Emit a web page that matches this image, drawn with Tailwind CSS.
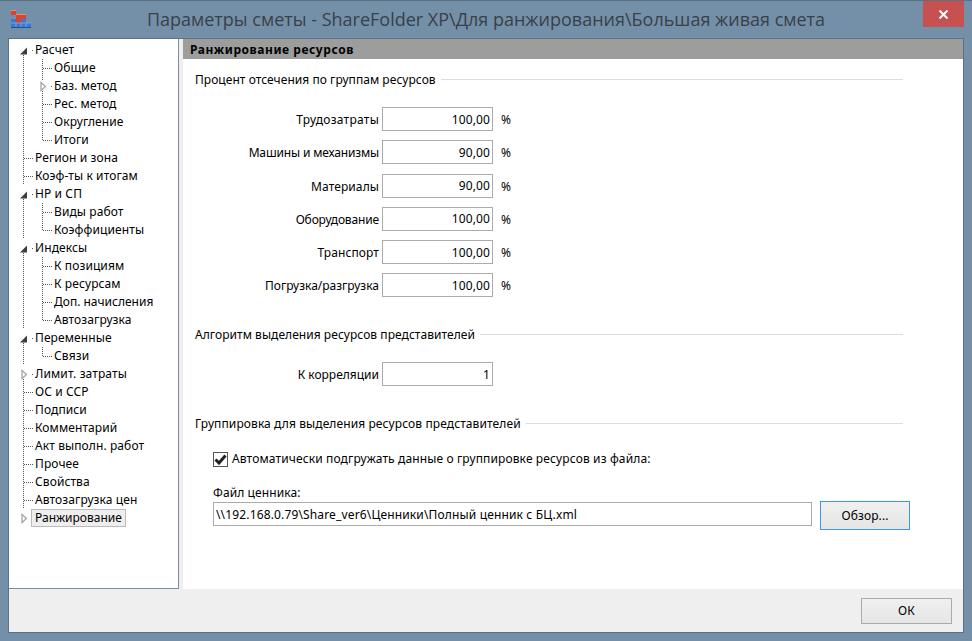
<!DOCTYPE html>
<html lang="ru">
  <head>
    <meta charset="UTF-8" />
    <title>Параметры сметы</title>
    <script src="https://cdn.jsdelivr.net/npm/@tailwindcss/browser@4"></script>
  </head>
  <body class="w-[972px] h-[641px] overflow-hidden bg-[#7390a8] font-['Noto_Sans',sans-serif] text-[12px] tracking-[0.1px] text-black">
    <svg width="0" height="0" class="absolute">
      <defs>
        <symbol id="mid" viewBox="0 0 25 18"><path d="M13.5 0V18M14 9.5H24" stroke="#555" stroke-dasharray="1 1" fill="none" /></symbol>
        <symbol id="open" viewBox="0 0 25 18"><path d="M13.5 14V18M22 9.5H23" stroke="#555" stroke-dasharray="1 1" fill="none" /><path d="M10 13.5H17V6.5Z" fill="#3c3c3c" /></symbol>
        <symbol id="closed" viewBox="0 0 25 18"><path d="M13.5 14V18M22 9.5H23" stroke="#555" stroke-dasharray="1 1" fill="none" /><path d="M12 5.5V13.5L16.5 9.5Z" fill="#fff" stroke="#a6a6a6" stroke-width="1.3" /></symbol>
        <symbol id="last" viewBox="0 0 25 18"><path d="M22 9.5H23" stroke="#555" stroke-dasharray="1 1" fill="none" /><path d="M12 5.5V13.5L16.5 9.5Z" fill="#fff" stroke="#a6a6a6" stroke-width="1.3" /></symbol>
        <symbol id="c-mid" viewBox="0 0 44 18"><path d="M13.5 0V18M32.5 0V18M33 9.5H43" stroke="#555" stroke-dasharray="1 1" fill="none" /></symbol>
        <symbol id="c-end" viewBox="0 0 44 18"><path d="M13.5 0V18M32.5 0V9M33 9.5H43" stroke="#555" stroke-dasharray="1 1" fill="none" /></symbol>
        <symbol id="c-exp" viewBox="0 0 44 18"><path d="M13.5 0V18M32.5 14V18M32.5 0V4M41 9.5H42" stroke="#555" stroke-dasharray="1 1" fill="none" /><path d="M31 5.5V13.5L35.5 9.5Z" fill="#fff" stroke="#a6a6a6" stroke-width="1.3" /></symbol>
      </defs>
    </svg>

    <header class="relative h-[38px] flex items-center justify-center border-t border-[#5b7186]">
      <svg class="absolute left-[10px] top-[9px]" width="22" height="19" viewBox="0 0 22 19">
        <path d="M1 0h5v5H1zM6 4h10v5H6zM6 9h5v4H6z" fill="#d8452e" />
        <path d="M1 0h5v1H1zM6 4h10v1H6z" fill="#ee8a70" />
        <path d="M1 9h5v4H1zM11 9h5v4h-5zM1 13h20v5H1z" fill="#3f78d0" />
        <path d="M1 17h20v1H1z" fill="#1f4f9a" />
        <path d="M6 13v4M11 13v4M16 13v4M1 13h20" stroke="#8fb2e4" stroke-width="0.7" />
      </svg>
      <h1 class="font-['Open_Sans',sans-serif] text-[18px] tracking-normal text-[#3a4048]">Параметры сметы - ShareFolder XP\Для ранжирования\Большая живая смета</h1>
      <button class="absolute right-[8px] top-0 w-[41px] h-[26px] bg-[#c75050] flex items-center justify-center">
        <svg width="11" height="9" viewBox="0 0 11 9"><path d="M1.5 0.5L9.5 8.5M9.5 0.5L1.5 8.5" stroke="#fff" stroke-width="2" /></svg>
      </button>
    </header>

    <div class="mx-[8px] h-[595px] border border-[#5b7186] bg-[#efefef] flex flex-col">
      <div class="flex h-[551px]">
        <nav class="w-[170px] bg-white border-r border-b border-[#7f8c99] pt-[2px] pl-[1px]">
          <div class="flex h-[18px] items-center"><svg class="w-[25px] h-[18px]"><use href="#open" /></svg><span>Расчет</span></div>
          <div class="flex h-[18px] items-center"><svg class="w-[44px] h-[18px]"><use href="#c-mid" /></svg><span>Общие</span></div>
          <div class="flex h-[18px] items-center"><svg class="w-[44px] h-[18px]"><use href="#c-exp" /></svg><span>Баз. метод</span></div>
          <div class="flex h-[18px] items-center"><svg class="w-[44px] h-[18px]"><use href="#c-mid" /></svg><span>Рес. метод</span></div>
          <div class="flex h-[18px] items-center"><svg class="w-[44px] h-[18px]"><use href="#c-mid" /></svg><span>Округление</span></div>
          <div class="flex h-[18px] items-center"><svg class="w-[44px] h-[18px]"><use href="#c-end" /></svg><span>Итоги</span></div>
          <div class="flex h-[18px] items-center"><svg class="w-[25px] h-[18px]"><use href="#mid" /></svg><span>Регион и зона</span></div>
          <div class="flex h-[18px] items-center"><svg class="w-[25px] h-[18px]"><use href="#mid" /></svg><span>Коэф-ты к итогам</span></div>
          <div class="flex h-[18px] items-center"><svg class="w-[25px] h-[18px]"><use href="#open" /></svg><span>НР и СП</span></div>
          <div class="flex h-[18px] items-center"><svg class="w-[44px] h-[18px]"><use href="#c-mid" /></svg><span>Виды работ</span></div>
          <div class="flex h-[18px] items-center"><svg class="w-[44px] h-[18px]"><use href="#c-end" /></svg><span>Коэффициенты</span></div>
          <div class="flex h-[18px] items-center"><svg class="w-[25px] h-[18px]"><use href="#open" /></svg><span>Индексы</span></div>
          <div class="flex h-[18px] items-center"><svg class="w-[44px] h-[18px]"><use href="#c-mid" /></svg><span>К позициям</span></div>
          <div class="flex h-[18px] items-center"><svg class="w-[44px] h-[18px]"><use href="#c-mid" /></svg><span>К ресурсам</span></div>
          <div class="flex h-[18px] items-center"><svg class="w-[44px] h-[18px]"><use href="#c-mid" /></svg><span class="tracking-normal">Доп. начисления</span></div>
          <div class="flex h-[18px] items-center"><svg class="w-[44px] h-[18px]"><use href="#c-end" /></svg><span>Автозагрузка</span></div>
          <div class="flex h-[18px] items-center"><svg class="w-[25px] h-[18px]"><use href="#open" /></svg><span>Переменные</span></div>
          <div class="flex h-[18px] items-center"><svg class="w-[44px] h-[18px]"><use href="#c-end" /></svg><span>Связи</span></div>
          <div class="flex h-[18px] items-center"><svg class="w-[25px] h-[18px]"><use href="#closed" /></svg><span>Лимит. затраты</span></div>
          <div class="flex h-[18px] items-center"><svg class="w-[25px] h-[18px]"><use href="#mid" /></svg><span>ОС и ССР</span></div>
          <div class="flex h-[18px] items-center"><svg class="w-[25px] h-[18px]"><use href="#mid" /></svg><span>Подписи</span></div>
          <div class="flex h-[18px] items-center"><svg class="w-[25px] h-[18px]"><use href="#mid" /></svg><span>Комментарий</span></div>
          <div class="flex h-[18px] items-center"><svg class="w-[25px] h-[18px]"><use href="#mid" /></svg><span>Акт выполн. работ</span></div>
          <div class="flex h-[18px] items-center"><svg class="w-[25px] h-[18px]"><use href="#mid" /></svg><span>Прочее</span></div>
          <div class="flex h-[18px] items-center"><svg class="w-[25px] h-[18px]"><use href="#mid" /></svg><span>Свойства</span></div>
          <div class="flex h-[18px] items-center"><svg class="w-[25px] h-[18px]"><use href="#mid" /></svg><span>Автозагрузка цен</span></div>
          <div class="flex h-[18px] items-center"><svg class="w-[25px] h-[18px]"><use href="#last" /></svg><span class="-ml-[4px] px-[3px] h-[18px] leading-[16px] tracking-normal bg-[#eee] border border-[#bbb]">Ранжирование</span></div>
        </nav>

        <main class="ml-[4px] w-[780px] bg-white">
          <h2 class="h-[20px] bg-[#9d9d9d] px-[7px] font-bold tracking-[0.55px] leading-[22px]">Ранжирование ресурсов</h2>

          <section class="pl-[12px] pr-[60px] pt-[12px]">
            <div class="flex items-center gap-[5px] h-[18px]"><h3 class="tracking-[0.05px]">Процент отсечения по группам ресурсов</h3><div class="flex-1 h-px bg-[#d5dfe5] -mt-px"></div></div>
            <div class="mt-[18px] flex flex-col gap-[9.3px]">
              <div class="flex items-center h-[24px]"><label class="w-[187px] text-right pr-[3px] pt-[2px] tracking-[0.25px]">Трудозатраты</label><input class="w-[111px] h-[24px] border border-[#ababab] text-right px-[2px]" value="100,00" /><span class="ml-[8px] pt-[2px]">%</span></div>
              <div class="flex items-center h-[24px]"><label class="w-[187px] text-right pr-[3px] pt-[2px] tracking-[-0.15px]">Машины и механизмы</label><input class="w-[111px] h-[24px] border border-[#ababab] text-right px-[2px]" value="90,00" /><span class="ml-[8px] pt-[2px]">%</span></div>
              <div class="flex items-center h-[24px]"><label class="w-[187px] text-right pr-[3px] pt-[2px]">Материалы</label><input class="w-[111px] h-[24px] border border-[#ababab] text-right px-[2px]" value="90,00" /><span class="ml-[8px] pt-[2px]">%</span></div>
              <div class="flex items-center h-[24px]"><label class="w-[187px] text-right pr-[3px] pt-[2px] tracking-[-0.15px]">Оборудование</label><input class="w-[111px] h-[24px] border border-[#ababab] text-right px-[2px]" value="100,00" /><span class="ml-[8px] pt-[2px]">%</span></div>
              <div class="flex items-center h-[24px]"><label class="w-[187px] text-right pr-[3px] pt-[2px]">Транспорт</label><input class="w-[111px] h-[24px] border border-[#ababab] text-right px-[2px]" value="100,00" /><span class="ml-[8px] pt-[2px]">%</span></div>
              <div class="flex items-center h-[24px]"><label class="w-[187px] text-right pr-[3px] pt-[2px] tracking-[-0.01px]">Погрузка/разгрузка</label><input class="w-[111px] h-[24px] border border-[#ababab] text-right px-[2px]" value="100,00" /><span class="ml-[8px] pt-[2px]">%</span></div>
            </div>
          </section>

          <section class="pl-[12px] pr-[60px] mt-[29px]">
            <div class="flex items-center gap-[5px] h-[18px]"><h3 class="tracking-[0.05px]">Алгоритм выделения ресурсов представителей</h3><div class="flex-1 h-px bg-[#d5dfe5] -mt-px"></div></div>
            <div class="mt-[18px] flex items-center h-[24px]"><label class="w-[187px] text-right pr-[3px] pt-[2px] tracking-normal">К корреляции</label><input class="w-[111px] h-[24px] border border-[#ababab] text-right px-[2px]" value="1" /></div>
          </section>

          <section class="pl-[12px] pr-[53px] mt-[29px]">
            <div class="flex items-center gap-[5px] h-[18px] mr-[7px]"><h3>Группировка для выделения ресурсов представителей</h3><div class="flex-1 h-px bg-[#d5dfe5] -mt-px"></div></div>
            <div class="mt-[18px] ml-[18px] flex items-center gap-[4px] h-[16px]">
              <span class="w-[15px] h-[15px] border border-[#555] flex items-center justify-center">
                <svg width="13" height="11" viewBox="0 0 13 11"><path d="M1.5 5.5L5 9L11.5 1.5" stroke="#222" stroke-width="3" fill="none" /></svg>
              </span>
              <label class="tracking-[0.13px]">Автоматически подгружать данные о группировке ресурсов из файла:</label>
            </div>
            <label class="block ml-[18px] mt-[17px] h-[18px]">Файл ценника:</label>
            <div class="ml-[18px] mt-[-1px] flex gap-[8px] items-start">
              <input class="w-[599px] h-[24px] mt-[1px] border border-[#ababab] px-[2px] tracking-[0.15px]" value="\\192.168.0.79\Share_ver6\Ценники\Полный ценник с БЦ.xml" />
              <button class="w-[90px] h-[29px] border border-[#3d97ec] bg-gradient-to-b from-[#f0f0f0] to-[#e5e5e5]">Обзор...</button>
            </div>
          </section>
        </main>
      </div>

      <footer class="h-[43px] flex justify-end items-start pt-[9px] pr-[11px]">
        <button class="w-[91px] h-[26px] border border-[#ababab] bg-gradient-to-b from-[#f0f0f0] to-[#e5e5e5]">ОК</button>
      </footer>
    </div>
  </body>
</html>
